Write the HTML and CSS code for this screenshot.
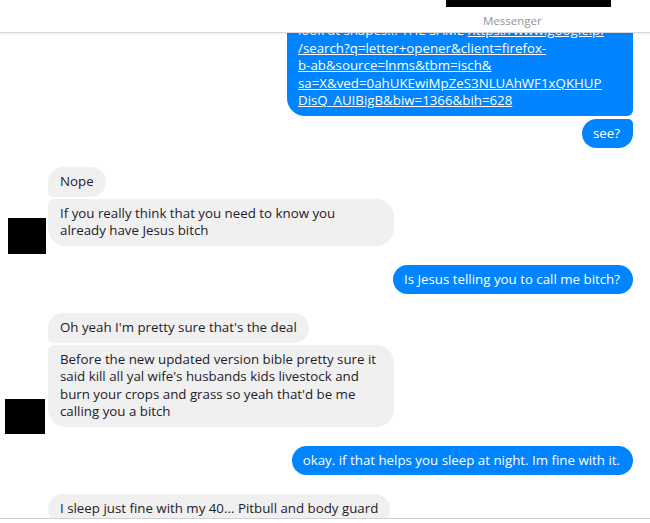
FILE: index.html
```html
<!DOCTYPE html>
<html lang="en">

<head>
	<meta charset="UTF-8">
	<meta name="viewport" content="width=device-width, initial-scale=1.0">
	<title>Messenger</title>
	<link rel="stylesheet" href="styles.css">
</head>

<body>

	<div class="chat">
		<header class="chat-header">
			<div class="redact-bar"></div>
			<div class="chat-title">Messenger</div>
		</header>

		<div class="thread">
			<div class="thread-inner">

				<div class="group group--me">
					<div class="bubble bubble--first bubble--full">look at shapes... THE SAME <a href="#">https://www.google.pl<br>/search?q=letter+opener&amp;client=firefox-<br>b-ab&amp;source=lnms&amp;tbm=isch&amp;<br>sa=X&amp;ved=0ahUKEwiMpZeS3NLUAhWF1xQKHUP<br>DisQ_AUIBigB&amp;biw=1366&amp;bih=628</a></div>
					<div class="bubble bubble--last">see?</div>
				</div>

				<div class="group group--them">
					<div class="avatar"></div>
					<div class="bubbles">
						<div class="bubble bubble--first">Nope</div>
						<div class="bubble bubble--last">If you really think that you need to know you already have Jesus bitch</div>
					</div>
				</div>

				<div class="group group--me">
					<div class="bubble">Is Jesus telling you to call me bitch?</div>
				</div>

				<div class="group group--them">
					<div class="avatar avatar--wide"></div>
					<div class="bubbles">
						<div class="bubble bubble--first">Oh yeah I'm pretty sure that's the deal</div>
						<div class="bubble bubble--last">Before the new updated version bible pretty sure it said kill all yal wife's husbands kids livestock and burn your crops and grass so yeah that'd be me calling you a bitch</div>
					</div>
				</div>

				<div class="group group--me">
					<div class="bubble">okay. if that helps you sleep at night. Im fine with it.</div>
				</div>

				<div class="group group--them">
					<div class="avatar avatar--hidden"></div>
					<div class="bubbles">
						<div class="bubble">I sleep just fine with my 40... Pitbull and body guard</div>
					</div>
				</div>

			</div>
		</div>

		<div class="composer"></div>
	</div>

</body>

</html>
```
FILE: styles.css
```css
body {
	margin: 0;
	background: #ffffff;
	font-family: "Open Sans", "Noto Sans", Arial, sans-serif;
	font-size: 13.3px;
	color: #1d2129;
}

.chat {
	display: flex;
	flex-direction: column;
	height: 523px;
	overflow: hidden;
}

/* --- Header --- */
.chat-header {
	height: 32px;
	flex: none;
	border-bottom: 1px solid #d6d8dc;
	box-shadow: 0 2px 1px rgba(0, 0, 0, 0.03);
	position: relative;
	z-index: 1;
	background: #ffffff;
}

.redact-bar {
	width: 165px;
	height: 7px;
	margin-left: 446px;
	background: #000000;
}

.chat-title {
	margin-left: 483px;
	margin-top: 7px;
	font-size: 11.5px;
	line-height: 14px;
	color: #90949c;
}

/* --- Thread --- */
.thread {
	height: 485px;
	flex: none;
	overflow: hidden;
}

.thread-inner {
	margin-top: -17px;
	padding: 0 17px 0 0;
	display: flex;
	flex-direction: column;
	gap: 19px;
}

.group {
	display: flex;
	flex-direction: column;
	gap: 3px;
}

.group--me {
	align-items: flex-end;
}

.group--them {
	flex-direction: row;
	align-items: flex-end;
	gap: 0;
}

.bubbles {
	display: flex;
	flex-direction: column;
	align-items: flex-start;
	gap: 2px;
}

.avatar {
	flex: none;
	width: 38px;
	height: 36px;
	margin: 0 2px -8px 8px;
	background: #000000;
}

.avatar--wide {
	width: 40px;
	height: 35px;
	margin: 0 3px -7px 5px;
}

.avatar--hidden {
	visibility: hidden;
}

.bubble {
	max-width: 322px;
	padding: 6px 12px;
	line-height: 17.5px;
	border-radius: 18px;
	background: #f1f0f0;
	color: #1d2129;
	overflow-wrap: break-word;
}

.bubble--full {
	width: 322px;
}

.group--me .bubble {
	background: #0084ff;
	color: #ffffff;
	padding: 6px 13px 6px 11px;
}

.group--me .bubble a {
	color: #ffffff;
	text-decoration: underline;
}

.group--them .bubble--first {
	border-bottom-left-radius: 6px;
}

.group--them .bubble--last {
	border-top-left-radius: 6px;
}

.group--me .bubble--first {
	border-bottom-right-radius: 6px;
}

.group--me .bubble--last {
	border-top-right-radius: 6px;
}

/* --- Composer --- */
.composer {
	flex: 1;
	border-top: 1px solid #d0d1d5;
	background: #ffffff;
}
```
